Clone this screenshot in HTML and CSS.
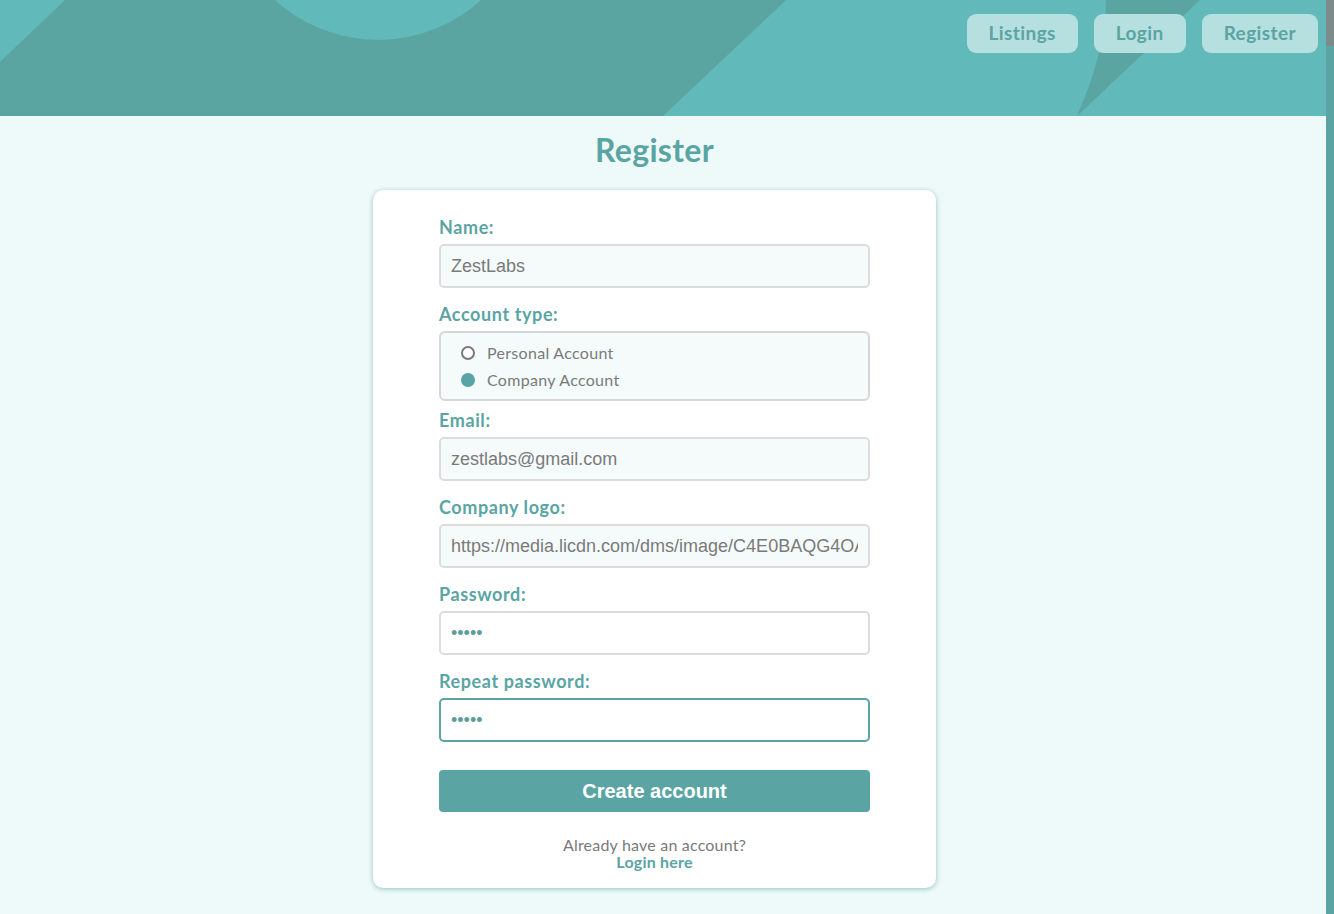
FILE: index.html
```html
<!DOCTYPE html>
<html lang="en">
<head>
<meta charset="utf-8">
<title>Register</title>
<link rel="stylesheet" href="styles.css">
</head>
<body>
<div class="app">
  <div class="page">
    <header class="hero">
      <svg class="hero-bg" viewBox="0 0 1326 116" preserveAspectRatio="none" aria-hidden="true">
        <rect x="0" y="0" width="1326" height="116" fill="#62b9ba"/>
        <polygon points="65,0 786,0 663,116 0,116 0,62" fill="#5aa4a2"/>
        <circle cx="378" cy="-113" r="153" fill="#62b9ba"/>
        <path d="M1106,0 L1200,0 L1077,116 Q1106,50 1106,0 Z" fill="#5aa4a2"/>
      </svg>
      <nav class="nav">
        <a class="nav-btn" href="#">Listings</a>
        <a class="nav-btn" href="#">Login</a>
        <a class="nav-btn" href="#">Register</a>
      </nav>
    </header>
    <main class="main">
      <h1 class="title">Register</h1>
      <form class="card">
        <div class="field">
          <label class="label" for="name">Name:</label>
          <input class="input filled" id="name" type="text" value="ZestLabs">
        </div>
        <div class="field field-radio">
          <span class="label">Account type:</span>
          <div class="radio-box">
            <label class="radio-row"><input class="radio" type="radio" name="type"> Personal Account</label>
            <label class="radio-row"><input class="radio" type="radio" name="type" checked> Company Account</label>
          </div>
        </div>
        <div class="field">
          <label class="label" for="email">Email:</label>
          <input class="input filled" id="email" type="text" value="zestlabs@gmail.com">
        </div>
        <div class="field">
          <label class="label" for="logo">Company logo:</label>
          <input class="input filled" id="logo" type="text" value="https://media.licdn.com/dms/image/C4E0BAQG4OAtxyz/company-logo_200_200/0/1519881113234">
        </div>
        <div class="field">
          <label class="label" for="pw">Password:</label>
          <input class="input secret" id="pw" type="password" value="12345">
        </div>
        <div class="field">
          <label class="label" for="pw2">Repeat password:</label>
          <input class="input secret focused" id="pw2" type="password" value="12345">
        </div>
        <button class="submit" type="button">Create account</button>
        <p class="footnote">Already have an account?<br><a class="footnote-link" href="#">Login here</a></p>
      </form>
    </main>
  </div>
  <div class="scrollbar">
    <div class="scroll-track"></div>
    <div class="scroll-thumb"></div>
  </div>
</div>
</body>
</html>
```
FILE: styles.css
```css
html, body {
  margin: 0;
  padding: 0;
}
body {
  height: 914px;
  overflow: hidden;
  font-family: "Lato", "Open Sans", sans-serif;
}
.app {
  display: flex;
  height: 914px;
}
.page {
  flex: 1;
  background: #eefaf9;
  min-width: 0;
}
.scrollbar {
  width: 8px;
  display: flex;
  flex-direction: column;
  background: #5aa5a3;
}
.scroll-track {
  height: 46px;
  background: #7d8c8b;
}
.scroll-thumb {
  flex: 1;
  background: #5aa5a3;
  border-radius: 4px 4px 0 0;
}
.hero {
  position: relative;
  height: 116px;
  overflow: hidden;
}
.hero-bg {
  position: absolute;
  left: 0;
  top: 0;
  width: 100%;
  height: 100%;
  display: block;
}
.nav {
  position: relative;
  display: flex;
  justify-content: flex-end;
  gap: 16px;
  padding: 14px 8px 0 0;
}
.nav-btn {
  display: flex;
  align-items: center;
  height: 39px;
  padding: 0 22px 2px;
  box-sizing: border-box;
  border-radius: 9px;
  background: #b6dfdf;
  color: #5aa5a3;
  font-weight: 700;
  font-size: 19px;
  letter-spacing: 0.4px;
  text-decoration: none;
}
.main {
  display: flex;
  flex-direction: column;
  align-items: center;
  padding-right: 17px;
}
.title {
  margin: 15px 0 21px;
  font-size: 32px;
  line-height: 38px;
  font-weight: 700;
  color: #5aa5a3;
  letter-spacing: 0.3px;
}
.card {
  width: 563px;
  box-sizing: border-box;
  padding: 26px 66px 18px;
  background: #ffffff;
  border-radius: 10px;
  box-shadow: 0 1px 5px rgba(90, 165, 163, 0.65);
}
.field {
  display: flex;
  flex-direction: column;
  margin-bottom: 15px;
}
.field-radio {
  margin-bottom: 8px;
}
.label {
  display: block;
  font-size: 18px;
  line-height: 22px;
  font-weight: 700;
  color: #5aa5a3;
  letter-spacing: 0.6px;
  margin-bottom: 6px;
}
.input {
  height: 44px;
  box-sizing: border-box;
  width: 100%;
  border: 2px solid #dcdcdc;
  border-radius: 5px;
  padding: 0 10px;
  font-family: "Liberation Sans", Arial, sans-serif;
  font-size: 18px;
  color: #7a7a7a;
  background: #ffffff;
  outline: none;
}
.input.filled {
  background: #f5fbfb;
}
.input.secret {
  color: #5e9b99;
}
.input.focused {
  border-color: #5aa5a3;
}
.radio-box {
  border: 2px solid #d6d6d6;
  border-radius: 6px;
  background: #f5fbfb;
  padding: 6px 20px;
}
.radio-row {
  display: flex;
  align-items: center;
  gap: 12px;
  height: 27px;
  font-size: 16px;
  color: #7a7a7a;
  letter-spacing: 0.3px;
}
.radio {
  appearance: none;
  -webkit-appearance: none;
  width: 14px;
  height: 14px;
  margin: 0;
  border: 2px solid #7a7a7a;
  border-radius: 50%;
  background: #ffffff;
  box-sizing: border-box;
}
.radio:checked {
  background: #5aa5a3;
  border-color: #5aa5a3;
}
.submit {
  display: block;
  width: 100%;
  height: 42px;
  margin-top: 28px;
  border: none;
  border-radius: 4px;
  background: #5aa5a3;
  color: #ffffff;
  font-family: "Liberation Sans", Arial, sans-serif;
  font-weight: 700;
  font-size: 20px;
}
.footnote {
  margin: 24px 0 0;
  text-align: center;
  font-size: 16px;
  line-height: 17px;
  color: #7a7a7a;
  letter-spacing: 0.2px;
}
.footnote-link {
  font-weight: 700;
  color: #5aa5a3;
  text-decoration: none;
}
```
